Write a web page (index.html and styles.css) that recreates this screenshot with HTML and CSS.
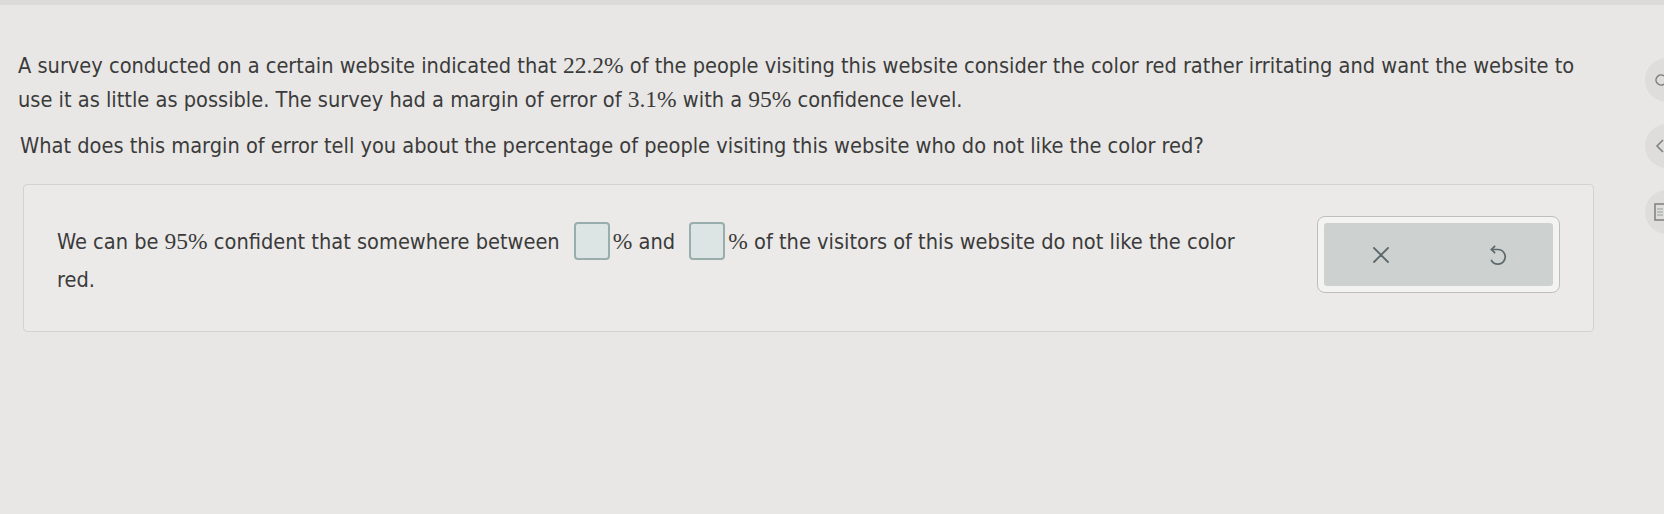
FILE: index.html
```html
<!DOCTYPE html>
<html lang="en">
<head>
<meta charset="utf-8">
<title>Margin of error</title>
<link rel="stylesheet" href="styles.css">
</head>
<body>
<div class="topbar"></div>
<main class="page">
  <p class="para">A survey conducted on a certain website indicated that <span class="num">22.2%</span> of the people visiting this website consider the color red rather irritating and want the website to use it as little as possible. The survey had a margin of error of <span class="num">3.1%</span> with a <span class="num">95%</span> confidence level.</p>
  <p class="para q">What does this margin of error tell you about the percentage of people visiting this website who do not like the color red?</p>
  <section class="answer">
    <div class="answer-text">We can be <span class="num">95%</span> confident that somewhere between <span class="blank"></span><span class="pct">%</span> and <span class="blank"></span><span class="pct">%</span> of the visitors of this website do not like the color red.</div>
    <div class="tools">
      <div class="tools-inner">
        <button class="tool" aria-label="Clear">
          <svg width="18" height="18" viewBox="0 0 18 18"><path d="M2 2 L16 16 M16 2 L2 16" stroke="#5d6a6d" stroke-width="1.8" fill="none" stroke-linecap="round"/></svg>
        </button>
        <button class="tool" aria-label="Undo">
          <svg width="22" height="24" viewBox="0 0 24 26"><path d="M7 7 H14 A8 8 0 1 1 7.07 19" stroke="#5d6a6d" stroke-width="1.9" fill="none" stroke-linecap="round"/><path d="M10.5 3.5 L7 7 L10.5 10.5" stroke="#5d6a6d" stroke-width="1.9" fill="none" stroke-linecap="round" stroke-linejoin="round"/></svg>
        </button>
      </div>
    </div>
  </section>
</main>
<div class="side side1"><svg width="12" height="14" viewBox="0 0 12 14"><path d="M10 3 A5 5 0 1 0 10 11" stroke="#7a7f80" stroke-width="1.5" fill="none"/></svg></div>
<div class="side side2"><svg width="12" height="14" viewBox="0 0 12 14"><path d="M9 1 L3 7 L9 13" stroke="#7a7f80" stroke-width="1.5" fill="none"/></svg></div>
<div class="side side3"><svg width="12" height="18" viewBox="0 0 12 18"><rect x="1" y="1" width="12" height="16" stroke="#7a7f80" stroke-width="1.5" fill="none"/><path d="M3 6 H9 M3 9 H9 M3 12 H9" stroke="#9a9fa0" stroke-width="1"/></svg></div>
</body>
</html>
```
FILE: styles.css
```css
html, body {
  margin: 0;
  padding: 0;
}
body {
  background: #e8e7e5;
  color: #3b3b3b;
  font-family: "DejaVu Sans Condensed", "DejaVu Sans", sans-serif;
  font-size: 21.6px;
  width: 1664px;
  height: 514px;
  overflow: hidden;
  position: relative;
}
.topbar {
  height: 5px;
  background: #dcdbd9;
}
.page {
  padding: 44px 0 0 18px;
}
.para {
  margin: 0;
  line-height: 34px;
  width: 1590px;
}
.q {
  margin-top: 12px;
  padding-left: 2px;
}
.num {
  font-family: "Liberation Serif", "Times New Roman", serif;
  font-size: 23.5px;
  line-height: 1;
}
.answer {
  margin: 21px 0 0 5px;
  width: 1536px;
  height: 115px;
  padding: 31px 0 0 33px;
  border: 1px solid #d3d2cf;
  border-radius: 4px;
  background: #ebeae8;
  display: flex;
  align-items: flex-start;
}
.answer-text {
  width: 1215px;
  flex: none;
  line-height: 36px;
  padding-top: 8px;
}
.blank {
  display: inline-block;
  width: 32px;
  height: 34px;
  border: 2px solid #98aeac;
  border-radius: 4px;
  background: #dde5e4;
  vertical-align: middle;
  margin: 0 3px 0 8px;
  position: relative;
  top: -2px;
}
.pct {
  font-family: "Liberation Serif", "Times New Roman", serif;
  font-size: 23.5px;
  line-height: 1;
}
.tools {
  margin-left: auto;
  margin-right: 33px;
  width: 229px;
  height: 63px;
  padding: 6px;
  border: 1px solid #bebebc;
  border-radius: 8px;
  background: #f3f3f2;
  flex: none;
}
.tools-inner {
  height: 100%;
  background: #cdd1d0;
  border-radius: 3px;
  display: flex;
  justify-content: space-around;
  align-items: center;
}
.tool {
  border: 0;
  background: transparent;
  padding: 0;
  width: 24px;
  height: 26px;
  display: flex;
  align-items: center;
  justify-content: center;
}
.side {
  position: absolute;
  left: 1645px;
  width: 44px;
  height: 44px;
  border-radius: 50%;
  background: #dedddb;
  display: flex;
  align-items: center;
  padding-left: 9px;
  box-sizing: border-box;
}
.side1 { top: 58px; }
.side2 { top: 124px; }
.side3 { top: 190px; }
```
